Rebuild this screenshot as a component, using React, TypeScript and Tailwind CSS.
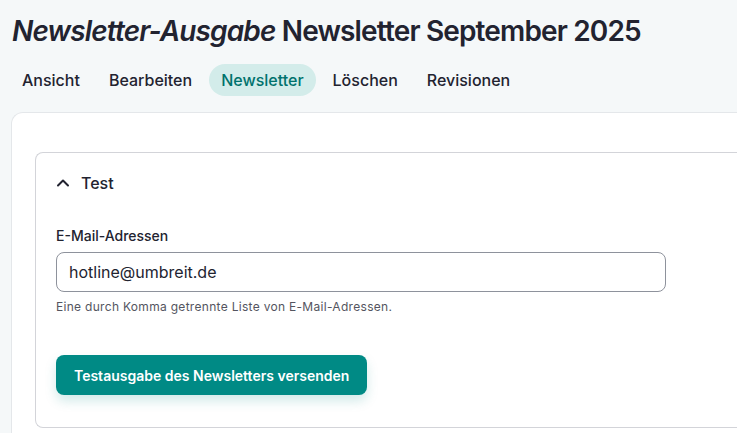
import React from "react";

const tabs = ["Ansicht", "Bearbeiten", "Newsletter", "Löschen", "Revisionen"];

function ChevronUp(): React.JSX.Element {
  return (
    <svg width="14" height="14" viewBox="0 0 14 14" fill="none" className="shrink-0">
      <path d="M2 9.5 7 4.5l5 5" stroke="#222330" strokeWidth="2" strokeLinecap="round" strokeLinejoin="round" />
    </svg>
  );
}

export default function App(): React.JSX.Element {
  return (
    <div
      className="flex h-[433px] w-[737px] flex-col overflow-hidden bg-[#f5f8f9] text-[#222330]"
      style={{ fontFamily: "Inter, 'Noto Sans', sans-serif" }}
    >
      <h1 className="ml-[12px] mt-[13px] whitespace-nowrap text-[28px] font-semibold leading-[36px] tracking-[-0.85px]">
        <em className="italic">Newsletter-Ausgabe</em> Newsletter September 2025
      </h1>

      <nav className="ml-[10px] mt-[15px] flex items-center gap-[5px]">
        {tabs.map((tab) => (
          <a
            key={tab}
            className={`flex h-[32px] items-center rounded-full px-[12px] text-[16px] font-medium ${
              tab === "Newsletter" ? "bg-[#d3ecea] text-[#00726d]" : "text-[#222330]"
            }`}
          >
            {tab}
          </a>
        ))}
      </nav>

      <main className="ml-[11px] mt-[16px] flex-1 rounded-tl-[12px] border-l border-t border-[#e4e7ea] bg-white pl-[23px] pt-[39px]">
        <section className="rounded-l-[8px] border-y border-l border-[#d3d4d9]">
          <div className="flex h-[59px] items-center gap-[11px] pl-[20px]">
            <ChevronUp />
            <span className="text-[16px] font-medium">Test</span>
          </div>

          <div className="px-[20px] pb-[32px] pt-[14px]">
            <label className="block text-[14px] font-medium leading-[20px]">E-Mail-Adressen</label>
            <div className="mt-[6px] flex h-[40px] w-[610px] items-center rounded-[8px] border border-[#8e929c] px-[12px] text-[16px]">
              hotline@umbreit.de
            </div>
            <p className="mt-[7px] text-[12px] leading-[16px] tracking-[0.3px] text-[#545560]">
              Eine durch Komma getrennte Liste von E-Mail-Adressen.
            </p>
            <button
              type="button"
              className="mt-[40px] flex h-[40px] items-center rounded-[8px] bg-[#008a85] px-[18px] text-[14px] font-semibold text-white shadow-[0_6px_12px_rgba(0,138,133,0.18)]"
            >
              Testausgabe des Newsletters versenden
            </button>
          </div>
        </section>
      </main>
    </div>
  );
}
